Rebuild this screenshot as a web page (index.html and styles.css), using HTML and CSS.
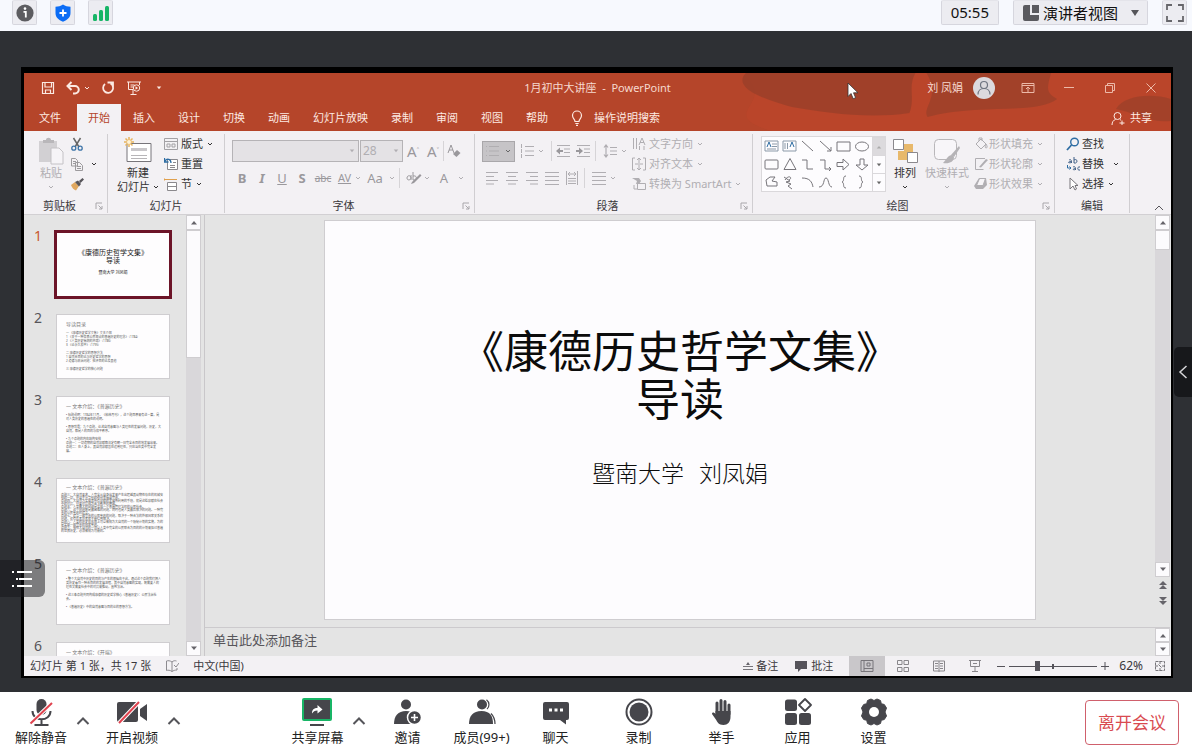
FILE: index.html
```html
<!DOCTYPE html>
<html lang="zh-CN">
<head>
<meta charset="utf-8">
<title>会议 - 演讲者视图</title>
<link rel="stylesheet" href="styles.css">
</head>
<body>
<svg class="sprite" aria-hidden="true">
  <symbol id="chev" viewBox="0 0 6 6"><path d="M1 2l2 2 2-2" fill="none" stroke="currentColor"/></symbol>
  <symbol id="up" viewBox="0 0 14 10"><path d="M1.500 8L7 2.500 12.500 8" fill="none" stroke="currentColor" stroke-width="2"/></symbol>
  <symbol id="tri-up" viewBox="0 0 8 5"><path d="M1 4.500h6L4 1z" fill="currentColor"/></symbol>
  <symbol id="tri-down" viewBox="0 0 8 5"><path d="M1 .5h6L4 4z" fill="currentColor"/></symbol>
  <symbol id="launch" viewBox="0 0 8 8"><path d="M1 7V1h6M3.500 3.500L7 7M7 4v3H4" fill="none" stroke="currentColor"/></symbol>
  <symbol id="lines" viewBox="0 0 14 14"><path d="M0 1.500h14M0 5.500h14M0 9.500h14M0 13.500h14" stroke="currentColor"/></symbol>
</svg>

<header class="topbar">
  <div class="top-left">
    <button class="chip" aria-label="会议信息"><svg viewBox="0 0 18 18"><circle cx="9" cy="9" r="8.600" fill="#5c5c60"/><path d="M7.500 7.800h2.300V13.500" stroke="#fff" stroke-width="1.800" fill="none"/><circle cx="9" cy="4.600" r="1.300" fill="#fff"/></svg></button>
    <button class="chip" aria-label="安全"><svg viewBox="0 0 18 18"><path d="M9 .4C6.500 2 4.500 2.600 1.500 2.700V9c0 4.200 3 7 7.500 8.700 4.500-1.700 7.500-4.500 7.500-8.700V2.700C13.500 2.600 11.500 2 9 .4z" fill="#0b6cf5"/><path d="M9 5.500v7M5.500 9h7" stroke="#fff" stroke-width="1.800"/></svg></button>
    <button class="chip" aria-label="网络"><svg viewBox="0 0 18 18"><g fill="#16b566"><rect x="1" y="10" width="4" height="7" rx="1.500"/><rect x="7" y="6" width="4" height="11" rx="1.500"/><rect x="13" y="2" width="4" height="15" rx="1.500"/></g></svg></button>
  </div>
  <div class="top-right">
    <time class="clock">05:55</time>
    <button class="view-btn"><svg class="i18" viewBox="0 0 18 18"><path d="M1 3a2 2 0 012-2h5v10h9v4a2 2 0 01-2 2H3a2 2 0 01-2-2z" fill="#5a5a5f"/><path d="M10 1h7v8h-7z" fill="#5a5a5f"/></svg>演讲者视图<svg class="caret" viewBox="0 0 8 6"><path d="M0 0h8L4 6z" fill="#55555a"/></svg></button>
    <button class="chip" aria-label="全屏"><svg viewBox="0 0 18 18"><path d="M1 6V1h5M12 1h5v5M17 12v5h-5M6 17H1v-5" fill="none" stroke="#66666b" stroke-width="1.800"/></svg></button>
  </div>
</header>

<main class="stage">
  <section class="window">
    <div class="ppt-head">
      <svg class="ink" viewBox="0 0 460 58" preserveAspectRatio="none" aria-hidden="true">
        <path d="M30 0h430v58H60C0 40 70 30 30 0z" fill="#c0452a" opacity=".5"/>
        <path d="M34 0h170c-8 14 0 24-6 40-40 6-84 0-118-6C50 26 20 14 34 0z" fill="#963f29" opacity=".7"/>
        <path d="M215 0h125c-4 14-6 20 6 26-20 16-80 4-130 18-6-10 14-20-1-44z" fill="#9a402a" opacity=".75"/>
        <path d="M405 36c8-14 36-16 55-10v22c-18 2-30-6-55-12z" fill="#9a402a" opacity=".7"/>
      </svg>
      <div class="titlebar">
        <div class="qat">
          <button aria-label="保存"><svg class="i14" viewBox="0 0 14 14"><path d="M1.500 1.500h11v11h-11zM4 1.500V6h6.500V1.500M4.500 12.500V9h5v3.500" fill="none" stroke="currentColor" stroke-width="1.200"/></svg></button>
          <button aria-label="撤消"><svg class="i16" viewBox="0 0 16 16"><path d="M3 6h7a3.500 3.500 0 010 7.500H8M6.500 2L2.500 6l4 4" fill="none" stroke="currentColor" stroke-width="2"/></svg><svg class="i6"><use href="#chev"/></svg></button>
          <button aria-label="重做"><svg class="i16" viewBox="0 0 16 16"><path d="M5 4a5 5 0 105.500-.5M7.500 2.500H13v5" fill="none" stroke="currentColor" stroke-width="1.800"/></svg></button>
          <button aria-label="从头开始"><svg class="i16" viewBox="0 0 16 16"><path d="M1 2h14M2.500 2v7.500H7M13.500 2v3M4.500 5h4M4.500 7h3M7 10v4M4.500 14.500h6" fill="none" stroke="currentColor"/><circle cx="10.500" cy="8" r="3.200" fill="none" stroke="currentColor"/><path d="M9.500 6.300v3.400l2.600-1.700z" fill="currentColor"/></svg></button>
          <button aria-label="自定义"><svg class="i6"><use href="#tri-down"/></svg></button>
        </div>
        <div class="doc-title">1月初中大讲座&nbsp; -&nbsp; PowerPoint</div>
        <div class="win-ctl">
          <span>刘 凤娟</span>
          <svg class="avatar" viewBox="0 0 22 22"><circle cx="11" cy="11" r="11" fill="#dcd9dd"/><circle cx="11" cy="8" r="3.500" fill="none" stroke="#6f7480" stroke-width="1.200"/><path d="M5 17.500c0-8 12-8 12 0" fill="none" stroke="#6f7480" stroke-width="1.200"/></svg>
          <button aria-label="功能区"><svg class="i14" viewBox="0 0 14 14"><path d="M1 2.500h12v9H1zM1 4.500h12M7 11V6M5 8l2-2 2 2" fill="none" stroke="currentColor"/></svg></button>
          <button aria-label="最小化"><svg class="i14" viewBox="0 0 14 14"><path d="M2 6.500h10" stroke="currentColor"/></svg></button>
          <button aria-label="还原"><svg class="i14" viewBox="0 0 14 14"><path d="M2.500 4.500h7v7h-7zM4.500 4.500v-2h7v7h-2" fill="none" stroke="currentColor"/></svg></button>
          <button aria-label="关闭"><svg class="i14" viewBox="0 0 14 14"><path d="M2.500 2.500l9 9M11.500 2.500l-9 9" stroke="currentColor"/></svg></button>
        </div>
      </div>
      <nav class="tabs">
        <button class="file">文件</button><button class="on">开始</button><button>插入</button><button>设计</button><button>切换</button><button>动画</button><button>幻灯片放映</button><button>录制</button><button>审阅</button><button>视图</button><button>帮助</button>
        <button class="tell"><svg viewBox="0 0 12 16"><path d="M4 11.500c0-2.500-2.500-3-2.500-6a4.500 4.500 0 019 0c0 3-2.500 3.500-2.500 6zM4.300 13.500h3.400M5 15.300h2" fill="none" stroke="currentColor" stroke-width="1.200"/></svg>操作说明搜索</button>
        <button class="share"><svg class="i14" viewBox="0 0 14 14"><circle cx="6.500" cy="5" r="3.500" fill="none" stroke="currentColor"/><path d="M1 14c0-3 1.500-5 3.500-5.500M9 8.500l1 .8M11 9.500v5M8.500 12h5" fill="none" stroke="currentColor"/></svg>共享</button>
      </nav>
    </div>

    <div class="ribbon">
      <section class="group clip">
        <div class="tools">
          <button class="big off"><svg class="i28" viewBox="0 0 28 28"><path d="M2 4h18v21H2z" fill="#d2d0d3"/><path d="M6 6V3h3c0-3 5-3 5 0h3v3z" fill="#b9b7ba"/><path d="M14 11h8l4 4v12H14z" fill="#f6f4f7" stroke="#c4c2c5"/></svg><span>粘贴</span><svg class="i6"><use href="#chev"/></svg></button>
          <div class="stack">
            <button aria-label="剪切"><svg class="i14" viewBox="0 0 14 14"><path d="M3.500 1l5.500 9M10.500 1L5 10" stroke="#666" stroke-width="1.500"/><circle cx="3.800" cy="11.200" r="2" fill="none" stroke="#3d74a8" stroke-width="1.300"/><circle cx="10.200" cy="11.200" r="2" fill="none" stroke="#3d74a8" stroke-width="1.300"/></svg></button>
            <button class="copy" aria-label="复制"><svg class="i14" viewBox="0 0 14 14"><path d="M1.500 1.500h4l2 2V9h-6zM5.500 5.500h4l3 3v5h-7zM7 9.500h4M7 11.500h4M3 4.500h3M3 6.500h2" fill="#f3f1f4" stroke="#9c9a9d"/></svg><svg class="i6"><use href="#chev"/></svg></button>
            <button aria-label="格式刷"><svg class="i14" viewBox="0 0 14 14"><path d="M1 8l4-3 4 4-3 4.500C4 13 2 11 1 8z" fill="#e0a860"/><path d="M5 5l3-1.500L11 7 9 9.500zM9 4l3.500-3L14 2.500 10.500 6z" fill="#57555a"/></svg></button>
          </div>
        </div>
        <div class="caption"><span>剪贴板</span><button aria-label="剪贴板选项"><svg class="i8"><use href="#launch"/></svg></button></div>
      </section>

      <section class="group slides">
        <div class="tools">
          <button class="big"><svg class="i28" viewBox="0 0 28 28"><path d="M3 6.500h24v18H3z" fill="#fff" stroke="#77757a"/><path d="M7 11h16v3H7z" fill="#c9c7ca"/><path d="M7 18.500h16M7 21.500h16" stroke="#b7b5b8"/><path d="M5 0v10M0 5h10M1.500 1.500l7 7M8.500 1.500l-7 7" stroke="#e8b45c" stroke-width="1.500"/><circle cx="5" cy="5" r="2" fill="#fff4d8"/></svg><span>新建</span><span class="with-chev">幻灯片<svg class="i6"><use href="#chev"/></svg></span></button>
          <div class="stack">
            <button><svg class="i14" viewBox="0 0 14 14"><path d="M.5 1.500h13v11H.5zM.5 4.500h13M3 7h3v3H3zM8 7h3v3H8z" fill="none" stroke="#a3a1a5"/></svg>版式<svg class="i6"><use href="#chev"/></svg></button>
            <button><svg class="i14" viewBox="0 0 14 14"><path d="M3.500 2.500h10v10h-10zM6 8.500h5M6 10.500h5M9 5.500h3" fill="#fff" stroke="#8b898d"/><path d="M7 6C7 2 3 1 1 4M.5 1v4h4" fill="none" stroke="#2e6da3" stroke-width="1.300"/></svg>重置</button>
            <button><svg class="i14" viewBox="0 0 14 14"><path d="M0 2.500h8M0 1v3" stroke="#e0a04c"/><path d="M3.500 5.500h9v8h-9zM3.500 9.500h9" fill="#fff" stroke="#8b898d"/><path d="M5 2.500h8" stroke="#e0a04c"/></svg>节<svg class="i6"><use href="#chev"/></svg></button>
          </div>
        </div>
        <div class="caption"><span>幻灯片</span></div>
      </section>

      <section class="group font off">
        <div class="tools rows">
          <div class="row">
            <div class="combo name"><input type="text" aria-label="字体名称"><svg class="i6"><use href="#tri-down"/></svg></div>
            <div class="combo size"><input type="text" aria-label="字号" value="28"><svg class="i6"><use href="#tri-down"/></svg></div>
            <button class="t a1" aria-label="增大字号">A<sup>˄</sup></button><button class="t a1" aria-label="减小字号">A<sup>˅</sup></button><i class="sep"></i>
            <button class="t" aria-label="清除格式"><svg class="i14" viewBox="0 0 14 14"><path d="M1 9l3-8 3 8M2 6h4" fill="none" stroke="currentColor"/><path d="M6 10l4-4 3.500 3-4 4z" fill="currentColor"/></svg></button>
          </div>
          <div class="row r2">
            <button class="t"><b>B</b></button><button class="t"><b><i>I</i></b></button><button class="t"><u>U</u></button><button class="t"><b>S</b></button><button class="t abc"><s>abc</s></button>
            <button class="t av"><u>AV</u></button><svg class="i6"><use href="#chev"/></svg>
            <button class="t aa">Aa</button><svg class="i6"><use href="#chev"/></svg><i class="sep"></i>
            <button class="t" aria-label="突出显示"><svg class="i16" viewBox="0 0 16 16"><path d="M1 8c0-3 4-3 4 0M5 5v5M1 8c0 3 4 2 4 0M7 2v8c4 1 5-5 0-4" fill="none" stroke="currentColor"/><path d="M6 12l8-8 1.500 1.500L8 13l-3 1z" fill="currentColor"/></svg></button><svg class="i6"><use href="#chev"/></svg>
            <button class="t fc">A</button><svg class="i6"><use href="#chev"/></svg>
          </div>
        </div>
        <div class="caption"><span>字体</span><button aria-label="字体选项"><svg class="i8"><use href="#launch"/></svg></button></div>
      </section>

      <section class="group para off">
        <div class="tools">
          <div class="rows">
            <div class="row">
              <button class="bullets" aria-label="项目符号"><svg class="i14" viewBox="0 0 14 14"><path d="M1 2.500h1M1 7h1M1 11.500h1M4 2.500h10M4 7h10M4 11.500h10" stroke="#b0aeb1"/></svg><svg class="i6"><use href="#chev"/></svg></button>
              <button class="drop" aria-label="编号"><svg class="i14" viewBox="0 0 14 14"><path d="M1.500 0v4M1.500 5v4M1.500 10v4M5 2.500h9M5 7h9M5 11.500h9" stroke="currentColor"/></svg><svg class="i6"><use href="#chev"/></svg></button><i class="sep"></i>
              <button aria-label="减少缩进"><svg class="i14" viewBox="0 0 14 14"><path d="M1 1.500h13M8 5h6M8 8.500h6M1 12.500h13" stroke="currentColor"/><path d="M0 7l4-3.500V6h3v2H4v2.500z" fill="#9a989c"/></svg></button>
              <button aria-label="增加缩进"><svg class="i14" viewBox="0 0 14 14"><path d="M1 1.500h13M8 5h6M8 8.500h6M1 12.500h13" stroke="currentColor"/><path d="M7 7L3 3.500V6H0v2h3v2.500z" fill="#9a989c"/></svg></button><i class="sep"></i>
              <button class="drop" aria-label="行距"><svg class="i14" viewBox="0 0 14 14"><path d="M3 1v12M1 3.500L3 1l2 2.500M1 10.500L3 13l2-2.500M7 3.500h7M7 7h7M7 10.500h7" fill="none" stroke="currentColor" stroke-width="1.200"/></svg><svg class="i6"><use href="#chev"/></svg></button>
            </div>
            <div class="row r2">
              <button aria-label="左对齐"><svg class="i14" viewBox="0 0 14 14"><path d="M1 1.500h12M1 5.500h8M1 9.500h12M1 13h8" stroke="currentColor"/></svg></button>
              <button aria-label="居中"><svg class="i14" viewBox="0 0 14 14"><path d="M1 1.500h12M3 5.500h8M1 9.500h12M3 13h8" stroke="currentColor"/></svg></button>
              <button aria-label="右对齐"><svg class="i14" viewBox="0 0 14 14"><path d="M1 1.500h12M5 5.500h8M1 9.500h12M5 13h8" stroke="currentColor"/></svg></button>
              <button aria-label="两端对齐"><svg class="i14"><use href="#lines"/></svg></button>
              <button aria-label="分散对齐"><svg class="i14" viewBox="0 0 14 14"><path d="M1.500 0v14M12.500 0v14M3 3h8M5 1L3 3l2 2M9 1l2 2-2 2M3 7.500h8M3 10h8M3 12.500h8" fill="none" stroke="currentColor"/></svg></button><i class="sep"></i>
              <button class="drop" aria-label="分栏"><svg class="i14"><use href="#lines"/></svg><svg class="i6"><use href="#chev"/></svg></button>
            </div>
          </div>
          <div class="stack">
            <button><svg class="i14" viewBox="0 0 14 14"><path d="M1.500 1v11M4.500 1v11M7 8l3-7 3 7M8 5.500h4M7.500 9v4M12 9v4" fill="none" stroke="currentColor"/></svg>文字方向<svg class="i6"><use href="#chev"/></svg></button>
            <button><svg class="i14" viewBox="0 0 14 14"><path d="M3 1H.5v12H3M11 1h2.500v12H11M7 1v5M5 3l2-2 2 2M7 8v5M5 11l2 2 2-2M3 7h8" fill="none" stroke="currentColor"/></svg>对齐文本<svg class="i6"><use href="#chev"/></svg></button>
            <button><svg class="i14" viewBox="0 0 14 14"><path d="M0 1h7l2 3-2 3H4L5 4z" fill="currentColor"/><path d="M5.500 6.500h8v6h-8zM2 8v4h3" fill="none" stroke="currentColor"/></svg>转换为 SmartArt<svg class="i6"><use href="#chev"/></svg></button>
          </div>
        </div>
        <div class="caption"><span>段落</span><button aria-label="段落选项"><svg class="i8"><use href="#launch"/></svg></button></div>
      </section>

      <section class="group draw">
        <div class="tools">
          <div class="gallery">
            <svg class="shapes" viewBox="0 0 110 54" fill="none" stroke="#77757a">
              <path d="M3 4h13v10H3zM10 7h5M10 9.500h5M5 12h9" stroke="#8b99a8"/><path d="M5 10l2-5 2 5" stroke="#2e6da3"/>
              <path d="M21 4h13v10H21zM23 6v6M25.500 6v6" stroke="#8b99a8"/><path d="M28 10l2-5 2 5" stroke="#2e6da3"/>
              <path d="M40 4l11 10M58 4l11 10M69 10v4h-4"/><path d="M75 5h13v9H75z"/><ellipse cx="100" cy="9.500" rx="6.500" ry="4.500"/>
              <rect x="3" y="23" width="13" height="9" rx="1"/><path d="M22 32.500h12L28 21.500zM40 23h5v9h6M58 23h5v9h6M67 30l2 2-2 2"/>
              <path d="M75 25.500h6V22l6 5.500-6 5.500v-3.500h-6zM98 22h4v6h4l-6 5-6-5h4z"/>
              <path d="M5 49l-1-6 4-3h5l-3 4 5 1v4zM22 40l6 4-4 1 5 2-3 2 4 3M23 43c4-6 8-2 4 0"/>
              <path d="M40 41c8 0 10 4 11 9M57 50c6 0 4-9 7-9s2 9 6 9M84 39c-4 0-1 5-4 6 3 1 0 6 4 6M97 39c4 0 1 5 4 6-3 1 0 6-4 6"/>
            </svg>
            <div class="gal-scroll"><button disabled aria-label="上一行"><svg class="i6"><use href="#tri-up"/></svg></button><button aria-label="下一行"><svg class="i6"><use href="#tri-down"/></svg></button><button aria-label="更多形状"><svg class="i6"><use href="#tri-down"/></svg></button></div>
          </div>
          <button class="big arrange"><svg class="i28" viewBox="0 0 28 28"><path d="M13 7h9v9h-9zM7 14h9v9H7z" fill="#e8b96b"/><path d="M2.500 2.500h10v10h-10zM16.500 15.500h10v10h-10z" fill="#fff" stroke="#8b898d"/></svg><span>排列</span><svg class="i6"><use href="#chev"/></svg></button>
          <button class="big off quick"><svg class="i28" viewBox="0 0 28 28"><rect x="1.500" y="2.500" width="22" height="20" rx="4" fill="#f8f6f9" stroke="#b9b7ba"/><path d="M26 9l-8 9 3 2 6-9z" fill="#b5b3b6"/><path d="M19 18c-4 0-5 4-9 8 6 1 11-1 11-6z" fill="#b5b3b6"/></svg><span>快速样式</span><svg class="i6"><use href="#chev"/></svg></button>
          <div class="stack off">
            <button><svg class="i14" viewBox="0 0 14 14"><path d="M2 7l5-5 5 5-5 5zM5 4V1h3v3M12 7c2 3 1 4 0 4s-1-2 0-4" fill="none" stroke="currentColor"/></svg>形状填充<svg class="i6"><use href="#chev"/></svg></button>
            <button><svg class="i14" viewBox="0 0 14 14"><path d="M11 1.500H1.500v11h8" fill="none" stroke="currentColor"/><path d="M5 10l7-8 2 1-7 7.500z" fill="currentColor"/></svg>形状轮廓<svg class="i6"><use href="#chev"/></svg></button>
            <button><svg class="i14" viewBox="0 0 14 14"><path d="M5 1h7l1 7-4 4H2L0 9z" fill="currentColor"/><path d="M5.500 1.500h6L9 8.500H2.500z" fill="#f6f4f7" stroke="currentColor"/></svg>形状效果<svg class="i6"><use href="#chev"/></svg></button>
          </div>
        </div>
        <div class="caption off"><span>绘图</span><button aria-label="绘图选项"><svg class="i8"><use href="#launch"/></svg></button></div>
      </section>

      <section class="group edit">
        <div class="tools"><div class="stack">
          <button><svg class="i14" viewBox="0 0 14 14"><circle cx="8.500" cy="5" r="3.800" fill="none" stroke="#2e6da3" stroke-width="1.400"/><path d="M5.500 8L1 13" stroke="#2e6da3" stroke-width="1.800"/></svg>查找</button>
          <button><svg class="i14 ab" viewBox="0 0 14 14"><path d="M3 3c2-1 2.500 0 2.500 3M5.500 4.500c-4 0-4 2 0 1M8 0v6M8 3c4-2 4 4 0 3M7 10c2-1 2.500 0 2.500 3M9.500 11.500c-3 0-3 2 0 1M14 10c-3-1-3 4 0 3" fill="none" stroke="#3f5f86"/><path d="M1.500 8v3H5M3.500 9.500L5 11l-1.500 1.500" fill="none" stroke="#2e6da3"/></svg>替换<svg class="i6 far"><use href="#chev"/></svg></button>
          <button><svg class="i14" viewBox="0 0 14 14"><path d="M4 1v11l3-3 2 4 1.500-1L9 8.500h3z" fill="#fff" stroke="#77757a"/></svg>选择<svg class="i6"><use href="#chev"/></svg></button>
        </div></div>
        <div class="caption"><span>编辑</span></div>
      </section>
      <div class="collapse"><button aria-label="折叠功能区"><svg class="i10" viewBox="0 0 10 6"><path d="M1 5l4-4 4 4" fill="none" stroke="#57555a"/></svg></button></div>
    </div>

    <div class="workspace">
      <aside class="thumbs">
        <ol>
          <li class="sel"><b>1</b><div class="thumb cover"><p class="big-t">《康德历史哲学文集》<br>导读</p><p class="by">暨南大学 刘凤娟</p></div></li>
          <li><b>2</b><div class="thumb"><h4>导读目录</h4><p>一 《康德历史哲学文集》文本介绍<br>1 《关于一种世界公民观点的普遍历史的理念》（1784）<br>2 《人类历史揣测的开端》（1786）<br>3 《论永久和平》（1795）</p><p class="gap">二 康德历史哲学的思想方法<br>1 自然合目的论与历史哲学的思想<br>2 道德与政治问题：批评目的论及其他</p><p class="gap">三 康德历史哲学的核心问题</p></div></li>
          <li><b>3</b><div class="thumb"><h4>一 文本介绍：《普遍历史》</h4><p>• 标题说明：1784年11月，《柏林月刊》，这个题目原来有这一篇，是对人类历史的普遍性的说明。</p><p class="gap">• 思想背景：九个命题，论述自然意图与人类理性的发展问题，历史，大自然，都是人的目的与和平秩序。</p><p class="gap">• 九个命题的内在结构安排<br>命题一：一切造物的自然禀赋都注定有朝一日完全合目的地发展出来。<br>命题二：在人身上，其自然禀赋旨在运用理性，只应当在类中完全发展。</p></div></li>
          <li><b>4</b><div class="thumb dense"><h4>一 文本介绍：《普遍历史》</h4><p>命题三：大自然要求，人完全从自身出发来产生出超越其动物性存在的机械安排的一切，并且不分享别的任何幸福或完善。<br>命题四：大自然为实现其所有禀赋的发展所利用的手段，就是这些禀赋在社会中的对抗，只要对抗成为合法秩序的原因。<br>命题五：人类最大的问题是达成一个普遍管理法权的公民社会。<br>命题六：这个问题既是最困难的问题，同时也是人类最后解决的问题。一种完善的公民宪政的建立。<br>命题七：建立一部完善的公民宪政的问题，取决于一种合法的外部国家关系的问题，没有后者前者就不能得到解决。<br>命题八：人类的历史在宏观上可以被视为大自然的一个隐秘计划的实施，为的是实现一部完善的国家宪政。<br>命题九：按照大自然的一项以人类中完全的公民联合为目的的计划来探讨普遍的世界历史，必须被视为可能的。</p></div></li>
          <li><b>5</b><div class="thumb"><h4>一 文本介绍：《普遍历史》</h4><p class="gap">• 整个大自然中历史的目的与产生的根据在于此，通过这个命题我们把人类历史看作一种合目的的发展进程，其中自然意图的实现，既需要人的理性又需要社会中的对抗来推动，直到法治。</p><p class="gap">• 这三条命题共同构成康德的历史哲学核心《普遍历史》：公民法治社会。</p><p class="gap">• 《普遍历史》中的自然意图与目的论的思想方法。</p></div></li>
          <li><b>6</b><div class="thumb"><h4>一 文本介绍：《开端》</h4></div></li>
        </ol>
      </aside>
      <div class="scroll side"><button aria-label="向上"><svg><use href="#tri-up"/></svg></button><div class="grip long"></div><div class="track"></div><button aria-label="向下"><svg><use href="#tri-down"/></svg></button></div>
      <div class="editor">
        <div class="canvas">
          <article class="slide"><h1>《康德历史哲学文集》<br>导读</h1><p class="author"><span>暨南大学</span><span>刘凤娟</span></p></article>
        </div>
        <div class="scroll main"><button aria-label="向上"><svg><use href="#tri-up"/></svg></button><div class="grip"></div><div class="track"></div><button aria-label="向下"><svg><use href="#tri-down"/></svg></button>
          <button class="bare" aria-label="上一张"><svg class="i8" viewBox="0 0 8 8"><path d="M0 4h8L4 0zM0 8h8L4 4z" fill="currentColor"/></svg></button><button class="bare" aria-label="下一张"><svg class="i8" viewBox="0 0 8 8"><path d="M0 0h8L4 4zM0 4h8L4 8z" fill="currentColor"/></svg></button></div>
        <div class="notes">单击此处添加备注</div>
        <div class="scroll notes-bar"><button aria-label="向上"><svg><use href="#tri-up"/></svg></button><button aria-label="向下"><svg><use href="#tri-down"/></svg></button></div>
      </div>
    </div>

    <footer class="status">
      <span>幻灯片 第 1 张，共 17 张</span>
      <svg class="i14 spell" viewBox="0 0 14 14"><path d="M7 3C5 1.500 3 1.500 1.500 2v9.500C3 11 5 11 7 12.500V3c1.500-1.500 3-1.500 4.500-1M7 12.500c1.500-1 3-1.500 5-1.500V9M9 6l2 2 3-4" fill="none" stroke="#8c8a8f"/></svg>
      <span>中文(中国)</span>
      <div class="status-right">
        <button class="lbl"><svg class="i10" viewBox="0 0 10 10"><path d="M0 5.500h10M0 8.500h10" stroke="#77757a"/><path d="M3 4h4L5 1z" fill="#66646a"/></svg>备注</button>
        <button class="lbl"><svg class="i14" viewBox="0 0 14 14"><path d="M1 2h12v8H7l-3 3v-3H1z" fill="#55535a"/></svg>批注</button>
        <div class="views">
          <button class="on" aria-label="普通视图"><svg class="i14" viewBox="0 0 14 14"><path d="M1 1.500h12v11H1zM4 1.500v11M4 9.500h9M7 4h3v3H7z" fill="none" stroke="#77757a"/></svg></button>
          <button aria-label="幻灯片浏览"><svg class="i14" viewBox="0 0 14 14"><path d="M1.500 1.500h4.500v4H1.500zM8 1.500h4.500v4H8zM1.500 8.500h4.500v4H1.500zM8 8.500h4.500v4H8z" fill="none" stroke="#88868a"/></svg></button>
          <button aria-label="阅读视图"><svg class="i14" viewBox="0 0 14 14"><path d="M1.500 2h11v10h-11zM7 2v11M3 4.500h3M3 7h3M3 9.500h3M8 4.500h3M8 7h3M8 9.500h3" fill="none" stroke="#88868a"/></svg></button>
          <button aria-label="放映"><svg class="i14" viewBox="0 0 14 14"><path d="M1 1.500h12M2.500 1.500v6h9v-6M7 7.500V12M4 12.500h6M5 4.500h4" fill="none" stroke="#88868a"/></svg></button>
        </div>
        <button class="zoom-btn" aria-label="缩小"><svg class="i8" viewBox="0 0 8 8"><path d="M0 4.500h8" stroke="#55535a"/></svg></button>
        <input class="zoom" type="range" min="10" max="180" value="62" aria-label="缩放">
        <button class="zoom-btn" aria-label="放大"><svg class="i8" viewBox="0 0 8 8"><path d="M0 4.500h8M4 0v8" stroke="#55535a"/></svg></button>
        <span class="pct">62%</span>
        <button aria-label="适应窗口"><svg class="i10" viewBox="0 0 10 10"><path d="M.5.5h9v9h-9zM5 0v3M5 7v3M0 5h3M7 5h3M3.500 3.500L5 5M6.500 6.500L5 5" fill="none" stroke="#77757a" stroke-dasharray="3 1"/></svg></button>
      </div>
    </footer>
  </section>
  <button class="float-left" aria-label="列表"><svg viewBox="0 0 22 20"><path d="M5 3h15M7 10h13M5 17h15" stroke="#fff" stroke-width="2"/><path d="M0 3h2M4 10h2M0 17h2" stroke="#fff" stroke-width="2"/></svg></button>
  <button class="float-right" aria-label="展开侧栏"><svg viewBox="0 0 10 16"><path d="M8.500 2L2 8l6.500 6" fill="none" stroke="#d6d6d8" stroke-width="1.500"/></svg></button>
  <svg class="pointer" viewBox="0 0 12 18"><path d="M1 1v13.500l3-3 2.200 5.200 2.400-1L6.500 10.800H11z" fill="#fff" stroke="#333" stroke-width=".8"/></svg>
</main>

<footer class="toolbar">
  <div class="bar-left">
    <button class="act"><svg viewBox="0 0 28 28"><rect x="9.500" y="1" width="10" height="16" rx="5" fill="#46464b"/><path d="M5.500 13c0 11 18 11 18 0M14.500 21.500V26M7.500 27h14" fill="none" stroke="#46464b" stroke-width="2"/><path d="M3.500 25.500L25 5" stroke="#fff" stroke-width="4"/><path d="M3.500 25.500L25 5" stroke="#e0434f" stroke-width="2"/></svg><span>解除静音</span></button>
    <button class="more" aria-label="音频选项"><svg><use href="#up"/></svg></button>
    <button class="act video"><svg class="wide-i" viewBox="0 0 32 28"><rect x="1" y="4" width="21" height="20" rx="2" fill="#46464b"/><path d="M24 11l7-5v17l-7-5z" fill="#46464b"/><path d="M3 25L23 4" stroke="#fff" stroke-width="4"/><path d="M3 25L23 4" stroke="#e0434f" stroke-width="2"/></svg><span>开启视频</span></button>
    <button class="more" aria-label="视频选项"><svg><use href="#up"/></svg></button>
  </div>
  <div class="bar-mid">
    <div class="pair">
      <button class="act"><svg class="wide-i" viewBox="0 0 32 28"><rect x="2" y="1" width="28" height="21" rx="1" fill="#46464b" stroke="#18b566" stroke-width="2"/><path d="M9 27h14" stroke="#46464b" stroke-width="2"/><path d="M11 15.500c0-4 2-5.500 5.500-5.500V7l5 4.500-5 4v-3c-3 0-4 1-5.500 3z" fill="#fff"/></svg><span>共享屏幕</span></button>
      <button class="more" aria-label="共享选项"><svg><use href="#up"/></svg></button>
    </div>
    <button class="act"><svg viewBox="0 0 28 28"><circle cx="13" cy="6.500" r="5" fill="#46464b"/><path d="M1 26c0-8 4-13 12-13s11 5 11 13z" fill="#46464b"/><circle cx="21.500" cy="19.500" r="7" fill="#46464b" stroke="#fff" stroke-width="1.500"/><path d="M21.500 16v7M18 19.500h7" stroke="#fff" stroke-width="1.600"/></svg><span>邀请</span></button>
    <button class="act"><svg viewBox="0 0 28 28"><circle cx="14" cy="6.500" r="5" fill="#46464b"/><path d="M1 26c0-8 4-13 12.500-13S25 18 25 26z" fill="#46464b"/><path d="M18.500 1.700c3.200 2.500 3.200 7 .5 9.300M23 15.500c3 3 4 6.500 4 10.500" fill="none" stroke="#46464b" stroke-width="1.200"/></svg><span>成员(99+)</span></button>
    <button class="act"><svg viewBox="0 0 28 28"><path d="M3 4h22q2 0 2 2v14q0 2-2 2h-1v4.500L18 22H3q-2 0-2-2V6q0-2 2-2z" fill="#46464b"/><path d="M7 12h3M12.500 12h3M18 12h3" stroke="#fff" stroke-width="3"/></svg><span>聊天</span></button>
    <button class="act rec"><svg viewBox="0 0 28 28"><circle cx="14" cy="14" r="12.500" fill="none" stroke="#46464b" stroke-width="2"/><circle cx="14" cy="14" r="9.500" fill="#46464b"/></svg><span>录制</span></button>
    <button class="act"><svg viewBox="0 0 28 28"><path d="M9 15V5M13 14V2.500M17 14V3.500M21 16V7" stroke="#46464b" stroke-width="3" stroke-linecap="round"/><path d="M7.500 13h15v6c0 5-3 8-7 8-5 0-6-3-8-6l-3.500-5c0-2 2-2 3.500 0z" fill="#46464b"/></svg><span>举手</span></button>
    <button class="act apps"><svg viewBox="0 0 28 28"><g fill="#46464b"><rect x="1" y="1.500" width="12" height="11.500" rx="2.500"/><rect x="1" y="15" width="12" height="12" rx="2.500"/><rect x="15" y="15" width="12" height="12" rx="2.500"/></g><path d="M21 1l6 6-6 6-6-6z" fill="none" stroke="#46464b" stroke-width="1.800" stroke-linejoin="round"/></svg><span>应用</span></button>
    <button class="act"><svg viewBox="0 0 28 28"><path d="M11 1l3 1.500L17 1l3.500 1.500.8 3.200 3 .8L26.500 10 25 14l1.500 4-2.200 3.500-3 .8-.8 3.200L17 27l-3-1.500L11 27l-3.500-1.500-.8-3.200-3-.8L1.500 18 3 14l-1.500-4 2.200-3.500 3-.8.8-3.200z" fill="#46464b" stroke="#46464b" stroke-linejoin="round"/><circle cx="14" cy="14" r="5" fill="#fff"/></svg><span>设置</span></button>
  </div>
  <button class="leave">离开会议</button>
</footer>
</body>
</html>
```
FILE: styles.css
```css
* { box-sizing: border-box; }
html, body { height: 100%; }
body {
  margin: 0;
  display: flex;
  flex-direction: column;
  overflow: hidden;
  font: 11px/16px "Noto Sans", "Noto Sans CJK SC", sans-serif;
  color: #333;
  background: #2e3034;
}
button {
  font: inherit;
  color: inherit;
  background: none;
  border: 0;
  padding: 0;
  margin: 0;
  white-space: nowrap;
}
button, .row, .stack, .tools { display: flex; align-items: center; }
svg { flex: none; display: block; }
.sprite { position: absolute; width: 0; height: 0; }
.i6 { width: 6px; height: 6px; }
.i8 { width: 8px; height: 8px; }
.i10 { width: 10px; height: 10px; }
.i14 { width: 14px; height: 14px; }
.i16 { width: 16px; height: 16px; }
.i18 { width: 18px; height: 18px; }
.i28 { width: 28px; height: 28px; }

/* meeting header */
.topbar {
  display: flex;
  justify-content: space-between;
  padding: 0 5px 6px 12px;
  background: #f7f9fe;
}
.top-left { display: flex; gap: 13px; }
.top-right { display: flex; gap: 14px; }
.chip, .clock, .view-btn {
  height: 25px;
  border: 1px solid #d6d6de;
  border-top-color: #e4e4ea;
  background: #ececf1;
  border-radius: 2px;
}
.chip { width: 25px; justify-content: center; }
.chip svg { width: 18px; height: 18px; }
.clock { padding: 0 9px; font-size: 15px; line-height: 23px; color: #111; }
.view-btn { padding: 0 8px; font-size: 15px; color: #111; gap: 3px; }
.caret { width: 8px; height: 6px; margin-left: 10px; }

/* shared screen */
.stage {
  position: relative;
  flex: 1;
  min-height: 0;
  padding: 36px 19px 14px 21px;
  display: flex;
}
.window {
  flex: 1;
  min-width: 0;
  display: flex;
  flex-direction: column;
  border: solid #000;
  border-width: 6px 2px 2px 3px;
  background: #e4e4e4;
}
.ppt-head { position: relative; background: #b5452a; color: #f6d9cf; }
.ink { position: absolute; right: 0; top: 0; width: 40%; height: 100%; }
.titlebar {
  position: relative;
  display: grid;
  grid-template-columns: 1fr auto 1fr;
  align-items: center;
  height: 31px;
  padding-bottom: 2px;
}
.qat { display: flex; gap: 10px; padding-left: 17px; }
.qat button { gap: 3px; color: #fbe9e2; }
.qat button:last-child { padding-left: 4px; }
.win-ctl { display: flex; justify-content: flex-end; align-items: center; }
.win-ctl button { width: 41px; height: 24px; justify-content: center; color: #ecb9a8; }
.avatar { width: 22px; height: 22px; margin: 0 12px 0 10px; }
.tabs { position: relative; display: flex; gap: 1px; height: 27px; padding-left: 4px; color: #fdeae3; }
.tabs button { padding: 0 11px; }
.tabs .file { margin-right: 4px; }
.tabs .on { background: #f3f1f4; color: #b5452a; }
.tabs .tell { gap: 11px; padding-left: 11px; }
.tell svg { width: 12px; height: 16px; }
.tabs .share { margin-left: auto; gap: 5px; padding-right: 19px; }

/* ribbon */
.ribbon {
  display: grid;
  grid-template-columns: 84fr 117fr 250fr 278fr 302fr 75fr 41fr;
  background: #f3f1f4;
  border-bottom: 1px solid #d2d0d3;
  padding: 3px 0 1px;
}
.group { display: flex; flex-direction: column; border-right: 1px solid #d0ced1; min-width: 0; }
.tools { height: 60px; align-items: flex-start; }
.caption { display: flex; margin-top: 5px; height: 14px; line-height: 14px; align-items: center; }
.caption span { flex: 1; text-align: center; color: #3a383c; }
.caption button { width: 12px; color: #a8a6aa; }
.off { color: #b0aeb2; }
.big { flex-direction: column; line-height: 14px; padding-top: 3px; }
.big > .i6 { margin-top: 4px; }
.big .i28 { margin-bottom: 1px; }
.with-chev { display: flex; align-items: center; gap: 3px; }
.stack { flex-direction: column; align-items: flex-start; }
.stack button { height: 20px; gap: 3px; }
.stack .i6 { margin-left: 1px; }
.clip .tools { padding-left: 13px; gap: 5px; }
.clip .copy { gap: 6px; }
.slides .tools { padding-left: 9px; gap: 5px; }
.rows { flex-direction: column; align-items: stretch; }
.rows .row { height: 34px; }
.rows .r2 { height: 20px; }
.sep { width: 1px; height: 20px; background: #d6d4d7; }
.font .tools { padding-left: 7px; }
.combo {
  display: flex;
  align-items: center;
  height: 22px;
  padding-right: 3px;
  background: #e4e2e5;
  border: 1px solid #b5b3b6;
}
.combo input { width: 100%; min-width: 0; border: 0; padding: 0 2px; background: none; font: inherit; font-size: 12px; color: #b0aeb2; }
.name { width: 127px; }
.size { width: 43px; margin-left: 1px; }
.t { width: 20px; justify-content: center; font-size: 13px; color: #9a989c; }
.a1 { font-size: 15px; }
.a1 sup { font-size: 8px; line-height: 8px; }
.abc { font-size: 10px; width: 22px; }
.av { font-size: 11px; width: 21px; }
.aa { width: 28px; }
.fc { width: 28px; }
.r2 .sep { margin: 0 4px; }
.para .tools { padding-left: 7px; justify-content: flex-start; }
.para .tools > .rows { width: 150px; }
.para .row button { width: 20px; justify-content: center; }
.para .row .bullets { width: 33px; height: 21px; gap: 6px; background: #c6c4c7; border: 1px solid #a9a7aa; color: #666; }
.para .row .drop { width: 34px; gap: 4px; }
.para .row .sep { margin: 0 2px; }
.draw .tools { padding-left: 8px; }
.gallery { display: flex; margin-top: 2px; height: 56px; background: #fdfcfe; border: 1px solid #dad8db; }
.shapes { width: 110px; height: 54px; }
.gal-scroll { display: flex; flex-direction: column; width: 13px; border-left: 1px solid #dad8db; }
.gal-scroll button { flex: 1; justify-content: center; border-top: 1px solid #dad8db; color: #666; }
.gal-scroll button:disabled { background: #dcdadd; color: #aaa; }
.arrange { margin-left: 5px; }
.quick { margin: 0 5px 0 6px; }
.draw .stack button { gap: 1px; }
.draw .stack .i6 { margin-left: 3px; }
.edit .tools { padding-left: 11px; }
.edit .stack button { gap: 2px; }
.edit .stack .i6 { margin-left: 2px; }
.edit .stack .far { margin-left: 7px; }
.collapse { display: flex; align-items: flex-end; justify-content: flex-end; padding-right: 7px; }

/* slide list and editor */
.workspace { flex: 1; min-height: 0; display: flex; }
.thumbs { flex: 0 0 162px; overflow: hidden; }
.thumbs ol { list-style: none; margin: 0; padding: 11px 0 0; }
.thumbs li { display: flex; height: 82px; padding-left: 10px; }
.thumbs b { width: 22px; font-size: 14px; line-height: 20px; font-weight: 400; color: #57555a; }
.thumbs .sel b { color: #c8562f; }
.thumb {
  width: 114px;
  height: 65px;
  margin-top: 6px;
  padding: 6px 8px 0 9px;
  overflow: hidden;
  background: #fefdfe;
  border: 1px solid #cfcdd0;
  font-size: 3px;
  line-height: 4px;
  color: #555;
}
.thumb h4 { margin: 0 0 4px; font-size: 5px; line-height: 6px; font-weight: 400; color: #777; }
.thumb p { margin: 0; }
.thumb .gap { margin-top: 4px; }
.thumb.dense { padding: 5px 4px 0; line-height: 3px; }
.dense h4 { padding-left: 5px; }
.sel .thumb {
  width: 118px;
  height: 69px;
  margin: 4px 0 0 -2px;
  padding: 15px 0 0;
  border: 3px solid #6c1428;
  text-align: center;
  color: #222;
  font-family: KaiTi, "Noto Sans CJK SC", sans-serif;
}
.cover .big-t { font-size: 7px; line-height: 8px; }
.cover .by { margin-top: 5px; font-size: 4px; line-height: 6px; }
.scroll { display: flex; flex-direction: column; width: 15px; background: #d9d7da; color: #66646a; }
.scroll button { height: 15px; justify-content: center; background: #fcfbfd; border: 1px solid #cfcdd0; }
.scroll svg { width: 8px; height: 5px; }
.track { flex: 1; }
.grip { height: 20px; background: #fcfbfd; border: 1px solid #cfcdd0; }
.grip.long { height: 128px; }
.editor {
  flex: 1;
  min-width: 0;
  margin-left: 3px;
  display: grid;
  grid-template: 1fr auto / 1fr 16px;
  border-left: 1px solid #c9c7ca;
}
.canvas { display: flex; justify-content: center; min-height: 0; padding: 5px 0 7px; }
.slide {
  height: 100%;
  aspect-ratio: 16 / 9;
  background: #fdfcfe;
  border: 1px solid #cfcdd0;
  text-align: center;
  color: #0c0c0c;
  font-family: KaiTi, "Noto Sans CJK SC", sans-serif;
}
.slide h1 { margin: 104px 0 0; font-size: 44px; line-height: 48px; font-weight: 400; }
.author { display: flex; justify-content: center; gap: 15px; margin: 35px 0 0; font-size: 23px; line-height: 32px; font-weight: 300; }
.scroll.main, .notes-bar { width: 15px; }
.scroll.main { background: none; }
.main .track { background: #d9d7da; }
.scroll .bare { background: none; border: 0; height: 16px; }
.main .bare svg { width: 8px; height: 8px; }
.main .bare:last-child { margin-bottom: 18px; }
.notes { border-top: 1px solid #cccacd; padding: 2px 8px 5px; font-size: 13px; line-height: 21px; color: #57555a; }
.notes-bar { border-top: 1px solid #cccacd; }
.notes-bar button { flex: 1; }

/* status bar */
.status { display: flex; align-items: center; height: 20px; padding-left: 6px; background: #f3f1f4; color: #3a383c; }
.spell { margin: 0 14px; }
.status-right { margin-left: auto; display: flex; align-items: center; padding-right: 6px; }
.lbl { gap: 3px; margin-right: 16px; }
.views { display: flex; }
.views button { width: 36px; height: 20px; justify-content: center; }
.views .on { background: #c9c7ca; }
.zoom-btn { margin: 0 4px; }
.zoom { appearance: none; width: 88px; height: 12px; margin: 0; background: linear-gradient(#55535a, #55535a) center / 100% 1px no-repeat, linear-gradient(#55535a, #55535a) center / 2px 5px no-repeat; }
.zoom::-webkit-slider-thumb { appearance: none; width: 5px; height: 10px; background: #55535a; }
.pct { margin: 0 12px 0 6px; font-size: 12px; }

/* overlays on the shared screen */
.float-left {
  position: absolute;
  left: 0;
  bottom: 95px;
  width: 45px;
  height: 37px;
  padding-left: 12px;
  border-radius: 0 6px 6px 0;
  background: rgba(20, 20, 24, .5);
}
.float-left svg { width: 22px; height: 20px; }
.float-right {
  position: absolute;
  right: 0;
  top: 316px;
  width: 18px;
  height: 50px;
  justify-content: center;
  border-radius: 5px 0 0 5px;
  background: #17181b;
}
.float-right svg { width: 10px; height: 16px; }
.pointer { position: absolute; left: 847px; top: 51px; width: 12px; height: 18px; }

/* meeting toolbar */
.toolbar {
  display: grid;
  grid-template-columns: 1fr auto 1fr;
  padding-right: 13px;
  background: #fff;
  font-size: 13px;
  color: #222;
}
.bar-left, .bar-mid, .pair { display: flex; }
.bar-left { padding-left: 15px; gap: 9px; }
.bar-mid { gap: 32px; }
.pair { gap: 9px; margin-right: -5px; }
.act { flex-direction: column; gap: 3px; padding-top: 6px; }
.act svg { width: 28px; height: 28px; }
.act .wide-i { width: 32px; }
.act.video { margin-left: 7px; }
.more { padding-top: 4px; color: #55555a; }
.more svg { width: 14px; height: 10px; }
.rec { padding-left: 23px; padding-right: 23px; }
.apps { padding-left: 16px; padding-right: 16px; }
.leave {
  justify-self: end;
  margin-top: 8px;
  padding: 0 12px;
  border: 1px solid #d0606c;
  border-radius: 4px;
  font-size: 17px;
  color: #d94a50;
}
```
